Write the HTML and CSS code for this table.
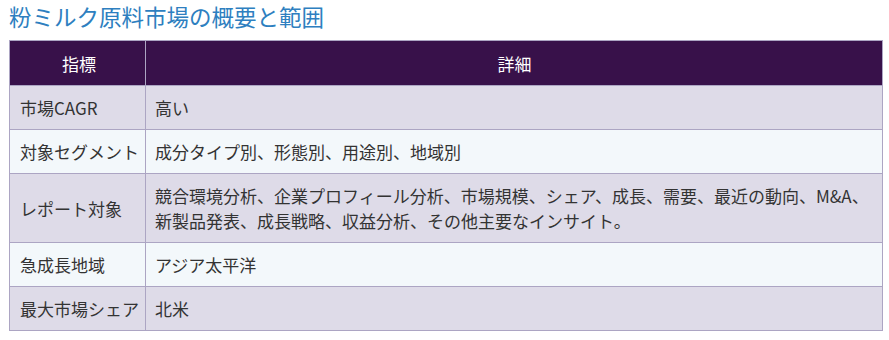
FILE: index.html
```html
<!DOCTYPE html>
<html lang="ja">
<head>
<meta charset="utf-8">
<title>粉ミルク原料市場の概要と範囲</title>
<link rel="stylesheet" href="styles.css">
</head>
<body>
<div class="wrap">
  <h2 class="title">粉ミルク原料市場の概要と範囲</h2>
  <table class="scope">
    <thead>
      <tr><th class="c1">指標</th><th>詳細</th></tr>
    </thead>
    <tbody>
      <tr class="odd"><td class="c1">市場CAGR</td><td>高い</td></tr>
      <tr class="even"><td class="c1">対象セグメント</td><td>成分タイプ別、形態別、用途別、地域別</td></tr>
      <tr class="odd"><td class="c1">レポート対象</td><td>競合環境分析、企業プロフィール分析、市場規模、シェア、成長、需要、最近の動向、M&amp;A、新製品発表、成長戦略、収益分析、その他主要なインサイト。</td></tr>
      <tr class="even"><td class="c1">急成長地域</td><td>アジア太平洋</td></tr>
      <tr class="odd"><td class="c1">最大市場シェア</td><td>北米</td></tr>
    </tbody>
  </table>
</div>
</body>
</html>
```
FILE: styles.css
```css
html, body {
  margin: 0;
  padding: 0;
  background: #ffffff;
}
body {
  font-family: "Noto Sans CJK JP", "Noto Sans", sans-serif;
  color: #333333;
}
.wrap {
  padding: 0 6px 0 9px;
}
.title {
  margin: 0;
  padding-top: 2px;
  height: 38px;
  font-size: 22.5px;
  line-height: 28px;
  font-weight: normal;
  color: #2e7fc0;
}
.scope {
  width: 100%;
  border-collapse: collapse;
  table-layout: fixed;
  font-size: 17px;
  line-height: 25px;
  border: 1px solid #aca5c3;
}
.scope th,
.scope td {
  border: 1px solid #aca5c3;
  padding: 9px 8px 9px 9px;
  text-align: left;
  vertical-align: middle;
}
.scope th {
  background: #38114a;
  color: #ffffff;
  font-weight: normal;
  text-align: center;
  padding-top: 10px;
}
.scope .c1 {
  width: 118px;
  padding-left: 10px;
  padding-right: 7px;
  white-space: nowrap;
}
.odd td {
  background: #dedbe8;
}
.even td {
  background: #f3f8fb;
}
```
